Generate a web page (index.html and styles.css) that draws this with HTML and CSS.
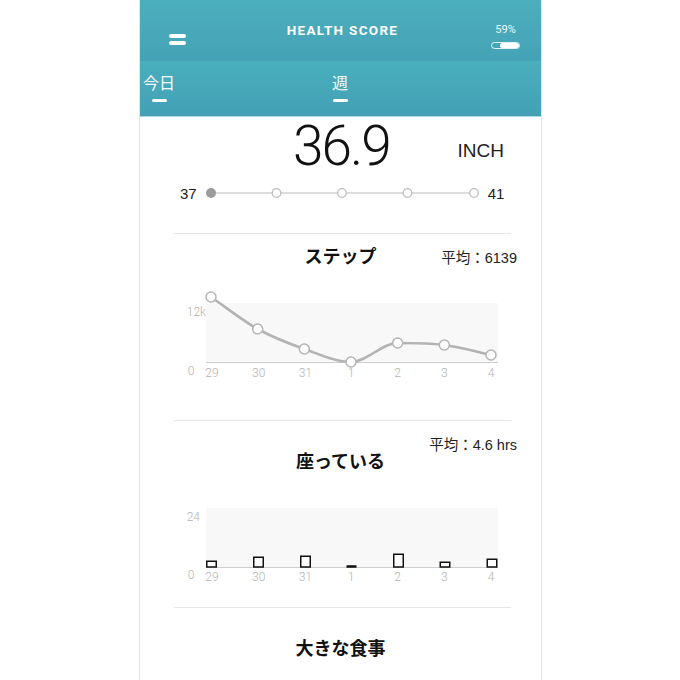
FILE: index.html
```html
<!DOCTYPE html>
<html lang="ja">
<head>
<meta charset="utf-8">
<title>Health Score</title>
<link rel="stylesheet" href="styles.css">
</head>
<body>
<div class="phone">
  <header class="topbar">
    <div class="menu"><span></span><span></span></div>
    <h1 class="title">HEALTH SCORE</h1>
    <div class="battery">
      <span class="pct">59%</span>
      <span class="bat"><span class="bat-fill"></span></span>
    </div>
  </header>
  <nav class="tabs">
    <div class="tab"><span class="tab-label">今日</span><i class="tab-mark"></i></div>
    <div class="tab"><span class="tab-label">週</span><i class="tab-mark"></i></div>
  </nav>

  <section class="reading">
    <div class="value">36.9</div>
    <div class="unit">INCH</div>
  </section>

  <div class="range">
    <span class="range-num">37</span>
    <svg class="range-track" width="275" height="14" viewBox="0 0 275 14">
      <line x1="6" y1="7" x2="269" y2="7" stroke="#d2d2d2" stroke-width="1.5"/>
      <circle cx="6" cy="7" r="5" fill="#9b9b9b"/>
      <circle cx="71.5" cy="7" r="4.3" fill="#fff" stroke="#bdbdbd" stroke-width="1.3"/>
      <circle cx="137" cy="7" r="4.3" fill="#fff" stroke="#bdbdbd" stroke-width="1.3"/>
      <circle cx="202.5" cy="7" r="4.3" fill="#fff" stroke="#bdbdbd" stroke-width="1.3"/>
      <circle cx="269" cy="7" r="4.3" fill="#fff" stroke="#bdbdbd" stroke-width="1.3"/>
    </svg>
    <span class="range-num">41</span>
  </div>

  <hr class="divider divider-first">

  <div class="card-head">
    <span></span>
    <h2 class="card-title">ステップ</h2>
    <span class="avg avg-inline">平均：6139</span>
  </div>

  <svg class="chart" width="401" height="152" viewBox="140 268 401 152">
    <rect x="206" y="303" width="292" height="59" fill="#f8f8f8"/>
    <line x1="206" y1="362.5" x2="498" y2="362.5" stroke="#cdcdcd" stroke-width="1"/>
    <g class="axis">
      <text x="206" y="316" text-anchor="end">12k</text>
      <text x="191" y="375" text-anchor="middle">0</text>
      <text x="212" y="377" text-anchor="middle">29</text>
      <text x="258.7" y="377" text-anchor="middle">30</text>
      <text x="305.3" y="377" text-anchor="middle">31</text>
      <text x="351" y="377" text-anchor="middle">1</text>
      <text x="397.7" y="377" text-anchor="middle">2</text>
      <text x="444.3" y="377" text-anchor="middle">3</text>
      <text x="491" y="377" text-anchor="middle">4</text>
    </g>
    <path d="M211,297 C226.56,307.67 242.11,320.33 257.67,329 C273.22,337.67 288.78,343.5 304.33,349 C319.89,354.5 335.44,362 351,362 C366.56,362 382.11,343 397.67,343 C413.22,343 428.78,343 444.33,345 C459.89,347 475.44,351.67 491,355" fill="none" stroke="#b3b3b3" stroke-width="2.6" stroke-linecap="round"/>
    <g fill="#fff" stroke="#b5b5b5" stroke-width="1.5">
      <circle cx="211" cy="297" r="5"/>
      <circle cx="257.67" cy="329" r="5"/>
      <circle cx="304.33" cy="349" r="5"/>
      <circle cx="351" cy="362" r="5"/>
      <circle cx="397.67" cy="343" r="5"/>
      <circle cx="444.33" cy="345" r="5"/>
      <circle cx="491" cy="355" r="5"/>
    </g>
  </svg>

  <hr class="divider">

  <div class="avg-row"><span class="avg">平均：4.6 hrs</span></div>
  <h2 class="card-title card-title-stacked">座っている</h2>

  <svg class="chart" width="401" height="139" viewBox="140 468 401 139">
    <rect x="206" y="508" width="292" height="59" fill="#f8f8f8"/>
    <line x1="206" y1="567.5" x2="498" y2="567.5" stroke="#cdcdcd" stroke-width="1"/>
    <g class="axis">
      <text x="200" y="521" text-anchor="end">24</text>
      <text x="191" y="579" text-anchor="middle">0</text>
      <text x="212" y="581" text-anchor="middle">29</text>
      <text x="258.7" y="581" text-anchor="middle">30</text>
      <text x="305.3" y="581" text-anchor="middle">31</text>
      <text x="351" y="581" text-anchor="middle">1</text>
      <text x="397.7" y="581" text-anchor="middle">2</text>
      <text x="444.3" y="581" text-anchor="middle">3</text>
      <text x="491" y="581" text-anchor="middle">4</text>
    </g>
    <g fill="#fff" stroke="#111" stroke-width="1.5">
      <rect x="206.75" y="561.25" width="9.5" height="5.75"/>
      <rect x="253.75" y="557.25" width="9.5" height="9.75"/>
      <rect x="300.75" y="556.25" width="9.5" height="10.75"/>
      <rect x="347.25" y="566" width="8.5" height="1"/>
      <rect x="393.75" y="554.25" width="9.5" height="12.75"/>
      <rect x="440.25" y="562.25" width="9.5" height="4.75"/>
      <rect x="487.25" y="559.25" width="9.5" height="7.75"/>
    </g>
  </svg>

  <hr class="divider">

  <h2 class="card-title card-title-last">大きな食事</h2>
</div>
</body>
</html>
```

FILE: styles.css
```css
html, body {
  margin: 0;
  padding: 0;
  background: #ffffff;
}

body {
  font-family: "Liberation Sans", "Noto Sans CJK JP", sans-serif;
  color: #1a1a1a;
  overflow: hidden;
}

.phone {
  width: 401px;
  min-height: 680px;
  margin-left: calc(50% - 201px);
  border-left: 1px solid #e4e4e4;
  border-right: 1px solid #e4e4e4;
  background: #fff;
}

/* Header */
.topbar {
  height: 61px;
  display: grid;
  grid-template-columns: 1fr auto 1fr;
  align-items: start;
  background: linear-gradient(#4cafbd, #45a2b6);
  color: #fff;
}

.menu {
  justify-self: start;
  margin: 34px 0 0 29px;
  display: flex;
  flex-direction: column;
  gap: 3px;
}

.menu span {
  display: block;
  width: 17px;
  height: 4px;
  border-radius: 2px;
  background: #fff;
}

.title {
  margin: 23px 0 0 4px;
  font-family: Roboto, "Liberation Sans", sans-serif;
  font-weight: 700;
  font-size: 13.5px;
  line-height: 14px;
  letter-spacing: 1.3px;
  color: #fff;
}

.battery {
  justify-self: end;
  margin: 24px 21px 0 0;
  display: flex;
  flex-direction: column;
  align-items: center;
}

.pct {
  font-family: Roboto, "Liberation Sans", sans-serif;
  font-size: 11px;
  line-height: 11px;
  color: #eef9fb;
}

.bat {
  margin-top: 7px;
  width: 27px;
  height: 5px;
  border: 1px solid rgba(255, 255, 255, 0.85);
  border-radius: 4px;
  display: flex;
  justify-content: flex-end;
  overflow: hidden;
}

.bat-fill {
  width: 19px;
  height: 5px;
  border-radius: 3px;
  background: #fff;
}

/* Tabs */
.tabs {
  height: 55px;
  display: flex;
  gap: 157px;
  padding-left: 3px;
  background: linear-gradient(#4aafbd, #43a0b5);
  border-bottom: 1px solid #a7dae3;
}

.tab {
  display: flex;
  flex-direction: column;
  align-items: center;
  padding-top: 13px;
}

.tab-label {
  font-family: "Noto Sans CJK JP", sans-serif;
  font-size: 16px;
  line-height: 16px;
  color: #f4fbfc;
}

.tab-mark {
  display: block;
  margin-top: 9px;
  width: 15px;
  height: 3px;
  border-radius: 2px;
  background: #fff;
}

/* Reading */
.reading {
  display: flex;
  align-items: flex-start;
  justify-content: space-between;
  padding: 2px 37px 0 153px;
  height: 54px;
}

.value {
  font-family: Roboto, "Liberation Sans", sans-serif;
  font-weight: 300;
  font-size: 55px;
  line-height: 54px;
  letter-spacing: -2px;
  color: #111;
}

.unit {
  margin-top: 22px;
  font-size: 19px;
  line-height: 19px;
  color: #222;
}

/* Range */
.range {
  height: 40px;
  display: flex;
  align-items: center;
  gap: 8px;
  padding-left: 40px;
}

.range-num {
  font-size: 15px;
  line-height: 15px;
  color: #222;
}

.range-track {
  display: block;
}

/* Dividers */
.divider {
  border: none;
  height: 1px;
  background: #e6e6e6;
  margin: 0 30px 0 34px;
}

.divider-first {
  margin-top: 20px;
}

/* Cards */
.card-head {
  display: grid;
  grid-template-columns: 1fr auto 1fr;
  align-items: baseline;
  padding-top: 8px;
}

.card-title {
  margin: 0;
  font-family: "Noto Sans CJK JP", sans-serif;
  font-weight: 700;
  font-size: 18px;
  line-height: 26px;
  text-align: center;
  color: #111;
}

.avg {
  font-family: "Liberation Sans", "Noto Sans CJK JP", sans-serif;
  font-size: 14.5px;
  line-height: 16px;
  color: #222;
}

.avg-inline {
  justify-self: end;
  padding-right: 24px;
}

.avg-row {
  padding: 16px 24px 0 0;
  text-align: right;
  line-height: 16px;
}

.card-title-stacked {
  margin-top: -1px;
  line-height: 16px;
}

.card-title-last {
  padding-top: 26px;
}

.chart {
  display: block;
}

.axis text {
  font-family: Roboto, "Liberation Sans", sans-serif;
  font-weight: 300;
  font-size: 12px;
  fill: #b3b3b3;
}
```
